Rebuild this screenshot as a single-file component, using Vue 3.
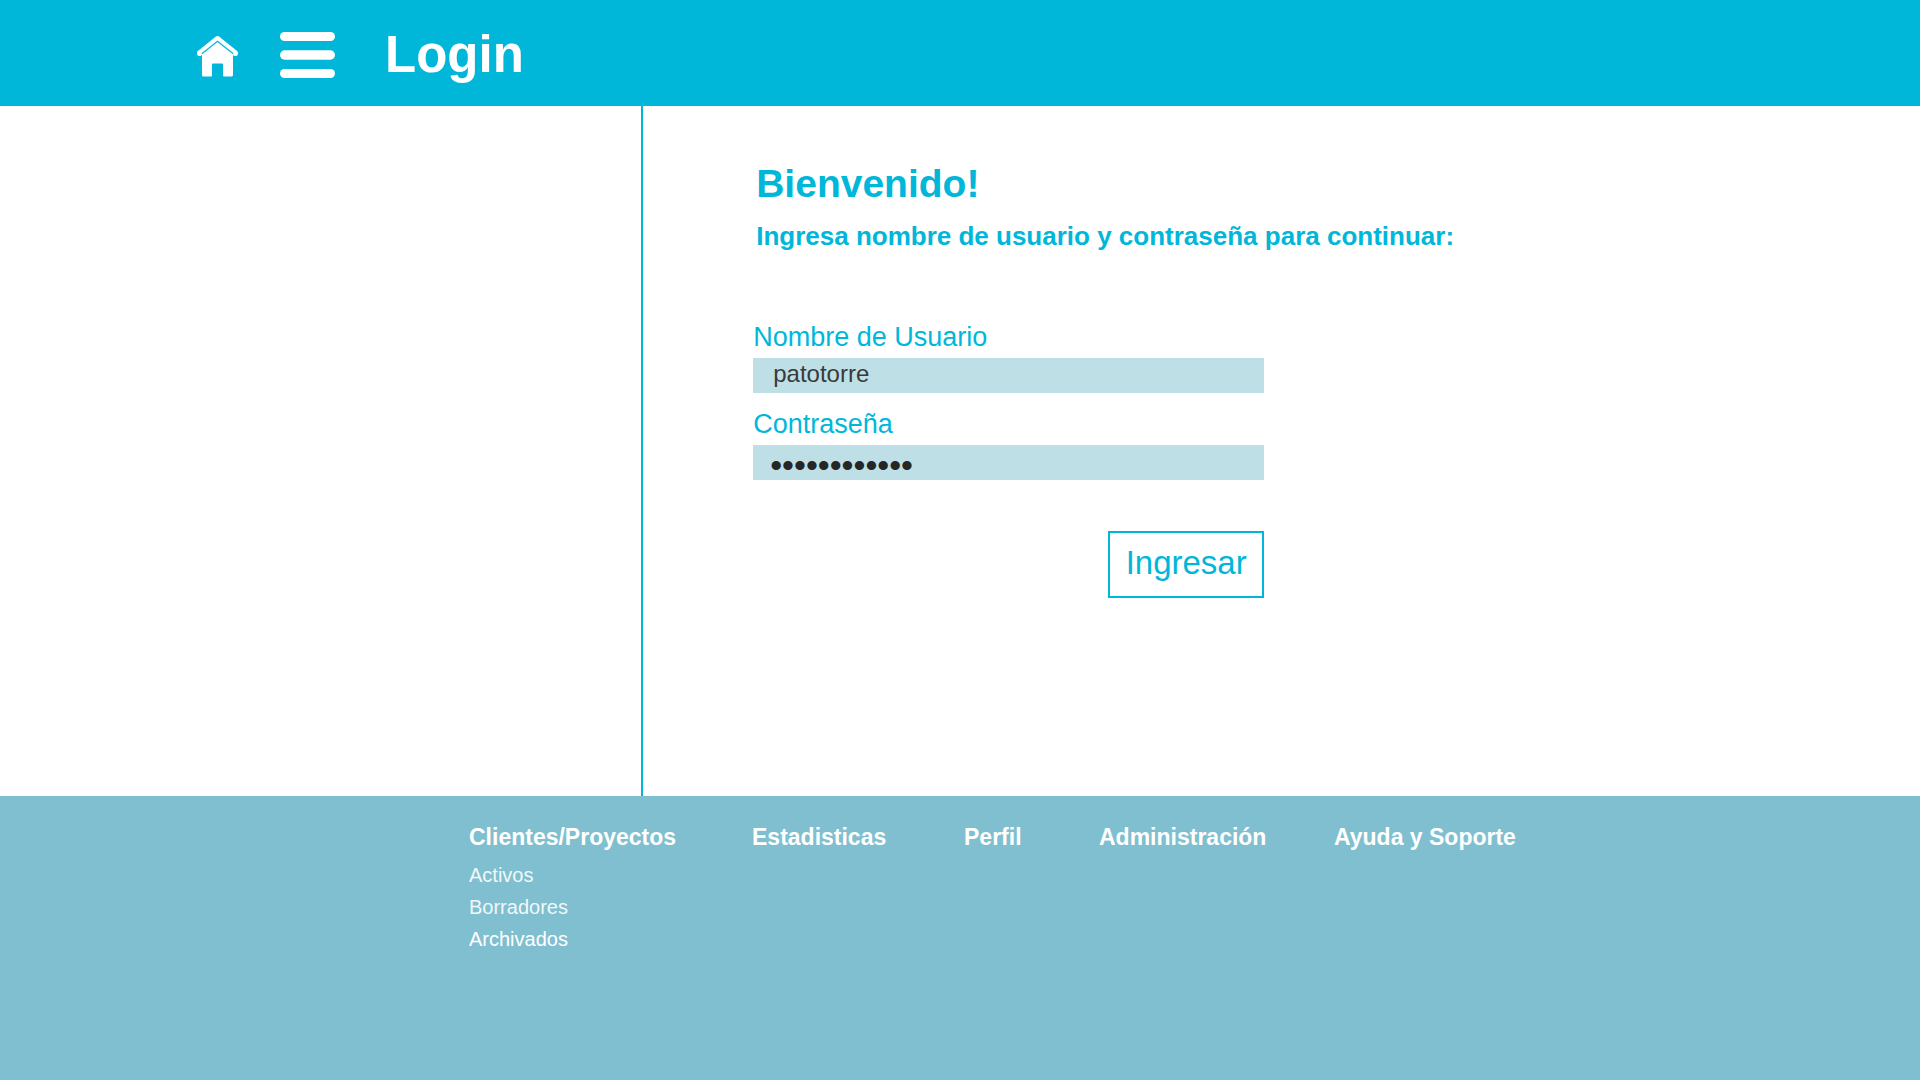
<script setup>
import { ref } from 'vue'

const username = ref('patotorre')
const password = ref('contrasena12')

const sections = [
  {
    title: 'Clientes/Proyectos',
    links: [
      { text: 'Activos', soft: true },
      { text: 'Borradores', soft: true },
      { text: 'Archivados', soft: false }
    ]
  },
  { title: 'Estadisticas', links: [] },
  { title: 'Perfil', links: [] },
  { title: 'Administración', links: [] },
  { title: 'Ayuda y Soporte', links: [] }
]
</script>

<template>
  <div class="page">
    <header class="topbar">
      <a class="home" href="#" aria-label="Inicio">
        <svg width="42" height="46" viewBox="0 -3.5 42 46" aria-hidden="true">
          <path d="M2.500 17.500 L20.500 3 L38.500 17.500" fill="none" stroke="#fff" stroke-width="5" stroke-linecap="round" stroke-linejoin="round" />
          <path d="M0 16.500 h5 v1 a2.300 2.300 0 0 1-5 1z M36 16.500 h5 v2 a2.300 2.300 0 0 1-5-1z" fill="#fff" />
          <path d="M5 18.300 L20.500 5.800 L36 18.300 V39.500 Q36 41 34.500 41 H27 Q26 41 26 40 V29 Q26 28 25 28 H16 Q15 28 15 29 V40 Q15 41 14 41 H6.500 Q5 41 5 39.500 Z" fill="#fff" />
          <path d="M4.800 18.300 L20.500 5.700 L36.200 18.300" fill="none" stroke="#00b7da" stroke-width="1.200" />
        </svg>
      </a>
      <button class="menu" type="button" aria-label="Menú">
        <svg width="55" height="46" viewBox="0 0 55 46" aria-hidden="true">
          <rect x="0" y="0" width="55" height="9" rx="4.500" fill="#fff" />
          <rect x="0" y="18.300" width="55" height="9.400" rx="4.700" fill="#fff" />
          <rect x="0" y="37" width="55" height="9" rx="4.500" fill="#fff" />
        </svg>
      </button>
      <h1>Login</h1>
    </header>

    <main class="content">
      <aside class="side"></aside>
      <section class="login">
        <h2>Bienvenido!</h2>
        <p class="intro">Ingresa nombre de usuario y contraseña para continuar:</p>
        <form class="form" @submit.prevent>
          <div class="field">
            <label for="username">Nombre de Usuario</label>
            <input id="username" v-model="username" type="text" autocomplete="username" />
          </div>
          <div class="field">
            <label for="password">Contraseña</label>
            <input id="password" v-model="password" class="secret" type="password" autocomplete="current-password" />
          </div>
          <button class="submit" type="submit">Ingresar</button>
        </form>
      </section>
    </main>

    <footer class="footer">
      <nav class="sitemap">
        <div v-for="section in sections" :key="section.title">
          <a class="title" href="#">{{ section.title }}</a>
          <ul v-if="section.links.length">
            <li v-for="link in section.links" :key="link.text">
              <a href="#" :class="{ soft: link.soft }">{{ link.text }}</a>
            </li>
          </ul>
        </div>
      </nav>
    </footer>
  </div>
</template>

<style>
body {
  margin: 0;
}
</style>

<style scoped>
.page,
.page * {
  box-sizing: border-box;
}

.page {
  display: flex;
  flex-direction: column;
  min-height: 100vh;
  background: #fff;
  color: #00b7da;
  font-family: "Liberation Sans", Arial, sans-serif;
}

h1,
h2,
p,
ul {
  margin: 0;
  padding: 0;
}

a {
  color: inherit;
  text-decoration: none;
}

button,
input {
  margin: 0;
  font-family: inherit;
}

.topbar {
  display: flex;
  align-items: center;
  min-height: 106px;
  padding: 4px 0 0 197px;
  background: #00b7da;
  color: #fff;
}

.home,
.menu {
  display: block;
  padding: 0;
  border: 0;
  background: none;
}

.home {
  margin-right: 41px;
}

.menu {
  margin-right: 50px;
}

svg {
  display: block;
}

h1 {
  font-size: 51px;
  line-height: 56px;
}

.content {
  display: flex;
  flex: 1;
}

.side {
  width: 33.5%;
  border-right: 2px solid #00b7da;
}

.login {
  flex: 1;
  padding: 54px 24px 48px 110px;
}

h2 {
  padding-left: 3px;
  font-size: 39px;
  line-height: 48px;
}

.intro {
  margin-top: 12px;
  padding-left: 3px;
  font-size: 26px;
  font-weight: bold;
  line-height: 32px;
}

.form {
  display: flex;
  flex-direction: column;
  gap: 15px;
  max-width: 511px;
  margin-top: 69px;
}

.field {
  display: flex;
  flex-direction: column;
  gap: 5px;
}

.field label {
  font-size: 27px;
  line-height: 32px;
}

.field input {
  width: 100%;
  height: 35px;
  padding: 0 20px 4px;
  border: 0;
  border-radius: 0;
  outline: 0;
  background: #bedfe6;
  color: #3a3a3a;
  font-size: 24px;
}

.field .secret {
  padding: 5px 17px 0;
  color: #262626;
  font-size: 34px;
}

.submit {
  align-self: flex-end;
  min-width: 156px;
  height: 67px;
  margin-top: 36px;
  padding: 0 12px 4px;
  border: 2px solid #00b7da;
  background: #fff;
  color: #00b7da;
  font-size: 33px;
}

.footer {
  padding: 27px 24px 125px 469px;
  background: #80bfcf;
  color: #fff;
}

.sitemap {
  display: grid;
  grid-template-columns: 283px 212px 135px 235px auto;
}

.title {
  display: block;
  font-size: 23px;
  font-weight: bold;
  line-height: 28px;
}

ul {
  margin-top: 8px;
  list-style: none;
}

li {
  font-size: 20px;
  line-height: 32px;
}

.soft {
  color: #f0f8fa;
}
</style>
